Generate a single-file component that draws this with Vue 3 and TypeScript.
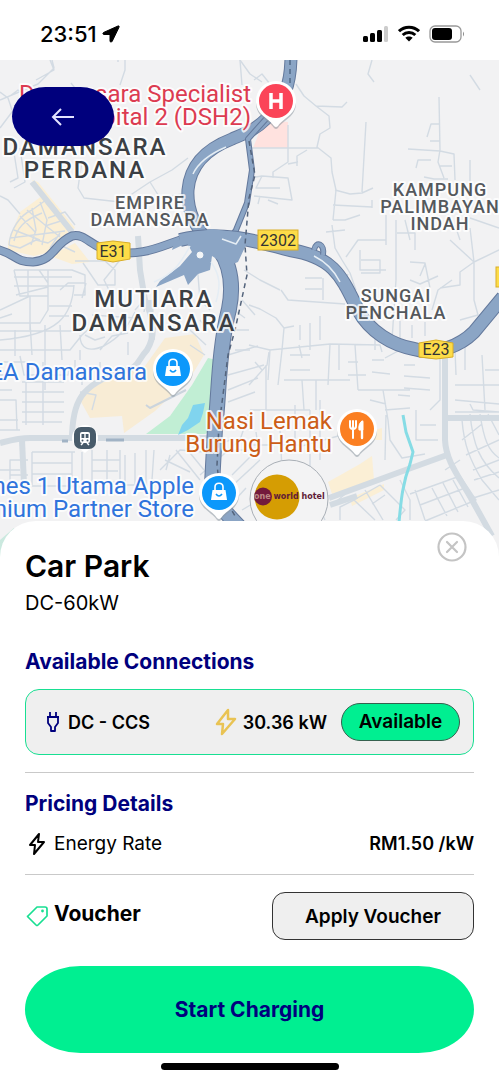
<script setup lang="ts">
interface Label {
  lines: string[]
  x: number
  y: number
  step: number
  kind: string
}

interface Pin {
  x: number
  y: number
  color: string
  icon: 'hospital' | 'bag' | 'food'
}

const labels: Label[] = [
  { lines: ['Damansara Specialist', 'Hospital 2 (DSH2)'], x: 251, y: 102, step: 23, kind: 'place health' },
  { lines: ['DAMANSARA', 'PERDANA'], x: 85, y: 155, step: 23, kind: 'area large' },
  { lines: ['EMPIRE', 'DAMANSARA'], x: 150, y: 209, step: 17, kind: 'area small' },
  { lines: ['KAMPUNG', 'PALIMBAYAN', 'INDAH'], x: 440, y: 196, step: 17, kind: 'area small' },
  { lines: ['MUTIARA', 'DAMANSARA'], x: 154, y: 307, step: 24, kind: 'area large' },
  { lines: ['SUNGAI', 'PENCHALA'], x: 396, y: 302, step: 17, kind: 'area small' },
  { lines: ['IKEA Damansara'], x: 147, y: 380, step: 23, kind: 'place shop' },
  { lines: ['Nasi Lemak', 'Burung Hantu'], x: 332, y: 429, step: 23, kind: 'place food' },
  { lines: ['Machines 1 Utama Apple', 'Premium Partner Store'], x: 194, y: 494, step: 23, kind: 'place shop' },
]

const pins: Pin[] = [
  { x: 276, y: 101, color: '#fb4458', icon: 'hospital' },
  { x: 173, y: 369, color: '#0c98fb', icon: 'bag' },
  { x: 357, y: 429, color: '#fb7f22', icon: 'food' },
  { x: 219, y: 493, color: '#0c98fb', icon: 'bag' },
]

const minorRoads: string[] = [
  'M52 60L54 68L38 84L0 100M50 60L54 70L36 80M71 83L78 92L95 104M125 60V70L120 85M118 62V50M0 92L8 98L12 110M0 128L12 112L24 122L40 130M10 96L18 90L24 94M0 196L8 200L20 214M82 160L78 188L84 198L120 202L150 182L172 170L188 158M150 182L160 198L182 194M12 140L18 178L10 182M20 148L25 182L14 188',
  'M240 60L250 74L262 82M254 80L262 74L270 84M296 84L304 96L316 106L329 116L330 128L320 134L317 147L331 158L332 172L336 190L333 220M316 106L342 107L347 102M249 148H318M366 122L362 192M335 190L350 194L362 193L373 188M333 205L372 207M372 200V208M288 125V162L273 172V178M288 164L298 162M297 166L297 156L307 150M250 178L262 176L288 178L292 200L254 196M262 176L256 188L280 188M268 200L278 204M258 204L260 196M439 97L440 150L438 162L444 178M427 137L431 124L440 124M408 149L440 151L454 154L455 180M416 168L418 160H431M440 166H452M424 177L434 179L448 179M470 160V184M430 141H440M372 60L368 74L374 82M470 75L480 90M470 218L499 228',
  'M332 225L335 248L342 260L350 273L356 290M333 220H345L360 215M326 232L345 230M346 257L358 240L386 240M360 250V270H386M361 260H380V273H361M348 274L340 290M396 220V280L392 340M386 215V245M397 233H415V250M410 262L425 263L430 288M450 240L474 262V300L478 315M474 262L499 250M455 225L460 240M452 280L438 290L432 310M425 264L420 276M410 280L420 284L438 276M478 315L460 320M474 262L460 272V285L440 288M470 228L474 262M405 220L410 240',
  'M305 278H322M305 289H322M323 278V300M281 290L288 300L345 304M249 305L260 309L276 318L284 328L282 350L278 385M284 328L294 326M300 325V340M310 323V350M320 316V340M249 345L270 350L330 344L380 345L382 352M270 350L268 380M330 344L328 385M339 345V370M355 345L358 390M299 345L302 358M365 330L375 336V350M400 320V350L385 358M412 325V338M425 322V336M440 350V400L430 410M290 355H310M290 370L310 370M255 362L262 370M348 362H358M348 375H366M358 390H410M372 360H384M372 372L390 374M404 365H415M404 376L430 378M404 388L430 390M455 350L456 375M455 385L499 385M482 355L485 410M455 400L499 404M465 340V370M485 370L499 370',
  'M249 385L267 365L269 352M266 365V410M284 380H350M250 410H310M302 380L304 410M316 380V410M249 445H303M256 432L258 446M280 430L282 470M295 405V450M310 410V480M320 400V460M250 410L240 440L200 475M240 425L250 420L249 430M228 390L258 378M228 375L264 365M228 402L255 392M228 355L258 346M230 440L210 448M228 450L250 450M232 475L252 455M232 486L260 460M235 500L246 488M242 510L252 504',
  'M383 390L388 420L390 440L402 458L425 454M385 410L410 408M416 410V440L438 440M420 425H436M370 400L386 404M386 415L385 460M398 395L410 396M470 404L473 410L499 412M455 412H499M462 420C464 445 470 460 482 480L499 500M470 414C473 445 480 462 499 478M480 414C484 440 488 450 499 458M488 414L499 435M462 440L482 424M466 455L499 440M473 470L499 460M474 480L499 472M470 499L499 490M445 470L460 460M332 505L350 490L380 480L415 465M340 520V507L354 500L375 520M354 500L380 485M365 490L383 520M380 485L405 510L396 520M385 495L372 504M400 480L410 500V520M415 490L425 520M410 494L460 476L476 500L425 521M420 505L465 488M432 488L447 516M443 483L458 512M453 480L468 507M320 510L325 520M302 446L360 430',
  'M9 245C10 230 20 215 32 210L46 200L54 206M14 241C17 228 24 220 42 213M9 245L20 248L36 240L48 243L60 235M27 210L45 225L60 237M20 216L36 233M14 230L40 240M32 208L36 230L31 245M40 202L47 220L42 245M10 238L65 231M48 218L65 212L75 225M45 226L64 220M60 233L50 248M52 248L58 253M60 245L75 252',
  'M14 270H72L85 275V295H74M14 270L20 296H48V270M14 277H72M14 286H74M16 295L48 287M28 270V297M39 270L48 283M0 310L30 296M0 318L12 314M48 287V310L40 323H0M30 296V330M60 290L68 283H85M75 261H105L115 270V285H98L83 263M86 283L82 298M49 306H72M49 316H69M74 285C72 315 60 335 0 340M0 350H70L82 335L92 326M0 331H80M15 330V356M30 322L32 355M45 325V390M60 325L62 360M80 335C80 350 90 352 104 346C118 338 126 330 135 312M85 335L95 340L105 337M100 350L112 336L128 333M120 260L104 280L110 292M128 342V355M135 310L144 300M92 315L135 318M80 350V360M146 300L144 312',
  'M0 362H28M0 375H14M0 390H12M0 400H16L17 430M20 356L24 375H68L70 365M22 382H64M22 392H64M22 402H64M22 412H64M22 422H62M26 365V425M43 362V425M75 360V374M0 420H18M0 430H20M82 366V385M100 362V380M80 392L96 395L92 410M32 452V485M32 452H75M32 463H72M32 474H72M32 486H74M72 452V488M92 450V482H118M92 460H120M92 471H118M107 450V480M120 450V482M82 452L82 490M125 455V485H146V450M135 453V485M154 450L152 480L165 485M160 470L180 450L205 452M165 460L190 472M170 455L166 470M176 450L200 480M186 448L204 470M28 460H10V487M10 475H28M0 470H20',
  'M196 250L200 300L210 310M200 320L208 330M190 330L206 345M190 345L205 355M240 60L242 85M235 350H250M234 330H249M242 300L255 315M244 270L260 280L280 290M234 310L245 318',
]

const arterials: string[] = [
  'M138 236L140 270L145 300C154 320 156 335 147 350C136 362 140 368 120 372C82 385 72 400 72 440',
  'M0 443C8 441 18 438 30 438H214',
  'M22 440L24 484',
  'M445 349V440C446 462 460 478 472 500L492 536',
  'M329 498L400 472L447 455',
  'M446 418H499',
  'M330 505L357 496',
  'M32 182L72 232M150 300L152 340',
]

const highways: { d: string; width: number }[] = [
  { d: 'M291 55C291 85 284 103 266 119C255 130 246 133 232 139C206 149 190 166 188 190C187 208 193 225 209 242', width: 12 },
  { d: 'M283 103L265 120L248 139L252 170L247 203L236 230L226 245', width: 5 },
  { d: 'M-4 249C17 254 14 262 33 262C55 260 53 244 72 236C85 233 90 246 109 251C145 258 164 244 184 239C207 232 229 237 245 238', width: 8 },
  { d: 'M180 240C220 230 260 242 290 250C335 257 342 278 358 310C370 332 392 345 414 349C437 356 461 345 474 332L503 297', width: 13 },
  { d: 'M208 238C228 253 235 279 229 309C218 352 219 400 215 428L212 485C213 502 229 516 244 532', width: 15 },
  { d: 'M314 250C316 240 325 244 323 255', width: 5 },
]
</script>

<template>
  <div class="screen">
    <header class="status">
      <div class="clock">
        <span>23:51</span>
        <svg width="18" height="18" viewBox="0 0 18 18" aria-hidden="true">
          <path d="M16 1L1.500 7.500C.5 8 .8 9.500 2 9.500H8V16C8 17.300 9.600 17.500 10.200 16.300L17 2.300C17.500 1.200 16.900.6 16 1Z" stroke="#000" />
        </svg>
      </div>
      <div class="signals">
        <svg width="26" height="18" viewBox="0 0 26 18" aria-hidden="true">
          <rect x="0" y="11" width="5" height="6" rx="1.500" />
          <rect x="7" y="8" width="5" height="9" rx="1.500" />
          <rect x="14" y="5" width="5" height="12" rx="1.500" />
          <rect x="21" y="1" width="4" height="16" rx="1.500" fill="#ccc" />
        </svg>
        <svg width="22" height="18" viewBox="0 0 22 18" aria-hidden="true">
          <g fill="none" stroke="#000" stroke-width="3">
            <path d="M1 6.200C6.600.8 15.400.8 21 6.200" />
            <path d="M4.700 10C8.200 6.700 13.800 6.700 17.300 10" />
          </g>
          <path d="M7.300 12.800C9.400 10.900 12.600 10.900 14.700 12.800L11 16.600Z" />
        </svg>
        <svg width="36" height="18" viewBox="0 0 36 18" aria-hidden="true">
          <rect x="1" y="1" width="31" height="16" rx="5" fill="none" stroke="#999" stroke-width="1.300" />
          <rect x="3" y="3" width="20" height="12" rx="3" />
          <path d="M34 6.500Q36 9 34 11.500Z" fill="#888" />
        </svg>
      </div>
    </header>

    <main>
      <section class="map" aria-label="Map">
        <svg class="canvas" viewBox="0 60 499 502" role="img" aria-label="Street map of Mutiara Damansara">
          <rect x="0" y="60" width="499" height="502" fill="#f2f2f3" />
          <g fill="#fbefd5">
            <path d="M8 242L20 212L42 196L32 180L38 182L75 228L66 234L50 252L34 256L8 250Z" />
            <path d="M50 256L75 243L90 262L72 264Z" />
            <path d="M80 400L92 385L145 366L165 338L195 334L204 355L192 375L155 411L124 433L122 416L90 418Z" fill="#f8ecd5" />
            <path d="M328 482L360 464L372 456L374 480L332 494Z" />
            <path d="M350 498L384 484L384 490L352 506Z" />
            <path d="M374 430L382 428V440H374Z" />
          </g>
          <path d="M264 120L288 122V148H253Z" fill="#ffe2df" />
          <path d="M208 358L192 385L170 416L146 434H205L214 430L217 360Z" fill="#c1eed4" />
          <path d="M205 403L193 405L188 418L182 425L178 435L188 430L200 422L203 413Z" fill="#80d4ee" />
          <path d="M0 540L14 528L30 562H0Z" fill="#cbe9df" />

          <g class="lines">
            <path v-for="(d, i) in minorRoads" :key="i" :d="d" stroke="#d3dbe3" stroke-width="1.400" />
            <path v-for="(d, i) in arterials" :key="i" :d="d" stroke="#d3dbe2" stroke-width="6" />
            <path d="M403 415L406 432L413 452L410 464C402 485 401 502 399 522" stroke="#86dce5" stroke-width="3" />
            <path d="M106 440H124M62 441H68" stroke="#a1b3c5" stroke-width="3" />
            <path d="M146 405L150 408L186 390" stroke="#cbd4dd" stroke-width="2" />
            <g v-for="(road, i) in highways" :key="i">
              <path :d="road.d" stroke="#64799c" :stroke-width="road.width + 1" />
              <path :d="road.d" stroke="#8ba5c5" :stroke-width="road.width - 1" />
            </g>
            <path d="M174 243L190 234L212 229L240 233L247 243L238 262L228 266L212 256L210 270L198 274L188 285L184 275L156 287L160 281L180 266L192 252L187 243L172 250Z" fill="#8ba5c5" />
            <circle cx="200" cy="255" r="3" fill="#f4f6f8" stroke="#f4f6f8" />
            <path d="M154 282C176 273 182 260 190 246M222 239L236 244L241 236M211 262C220 275 221 285 216 302M193 174C199 161 212 153 226 147M314 256C326 262 335 272 340 282" stroke="#e5edf4" stroke-width="1.500" />
            <path d="M249 141L255 175L249 198L245 245L247 275L242 298L235 330L228 355L223 395L219 425L217 465L220 490L235 516" stroke="#54647c" stroke-width="1.500" stroke-dasharray="5 4" />
            <path d="M290 60V84L281 108" stroke="#526987" stroke-width="1.500" stroke-dasharray="5 4" />
          </g>

          <g class="shields">
            <path d="M97 243L113 241L130 243V259L113 262L97 259Z" />
            <path d="M419 343L436 340L453 343V357L436 359L419 357Z" />
            <rect x="258" y="230" width="40" height="20" />
            <rect x="496" y="267" width="10" height="20" />
            <text x="113" y="257">E31</text>
            <text x="436" y="355">E23</text>
            <text x="278" y="246">2302</text>
          </g>

          <text v-for="label in labels" :key="label.lines.join()" :class="label.kind">
            <tspan
              v-for="(line, i) in label.lines"
              :key="line"
              :x="label.x"
              :y="label.y + i * label.step"
            >{{ line }}</tspan>
          </text>

          <g v-for="pin in pins" :key="`${pin.x}-${pin.y}`" :transform="`translate(${pin.x} ${pin.y})`">
            <path d="M-20 1C-20 15 -7 18 -2 26Q0 28 2 26C7 18 20 15 20 1Z" fill="#8b96a088" transform="translate(0 1)" />
            <path d="M-20 0A20 20 0 1 1 20 0C20 14 7 17 2 25Q0 27 -2 25C-7 17 -20 14 -20 0Z" fill="#fff" />
            <circle r="17" :fill="pin.color" />
            <path v-if="pin.icon === 'hospital'" d="M-5 -8V8M5 -8V8M-5 0H5" stroke="#fff" stroke-width="3.500" fill="none" />
            <g v-else-if="pin.icon === 'bag'">
              <path d="M-6.500 -3H6.500L8 7H-8Z" fill="#fff" />
              <path d="M-4 -3V-6C-4 -11 4 -11 4 -6V-3" fill="none" stroke="#fff" stroke-width="1.600" />
              <path d="M-3 1Q0 5 3 1" fill="none" stroke="#0c98fb" stroke-width="1.600" />
            </g>
            <g v-else fill="none" stroke="#fff" stroke-linecap="round">
              <path d="M-7 -8V-3Q-7 0 -4 0Q-1 0 -1 -3V-8M-4 -8V9" stroke-width="2" />
              <path d="M5 9V-7" stroke-width="2.400" />
              <path d="M5.500 -8Q1 -6 2 1H5.500Z" fill="#fff" stroke-width="1" />
            </g>
          </g>

          <g transform="translate(85 438)">
            <path d="M-13 0A13 13 0 0 1 13 0C13 8 5 10 0 15C-5 10 -13 8 -13 0Z" fill="#fff" />
            <rect x="-11" y="-11" width="22" height="22" rx="7" fill="#485b6a" />
            <rect x="-5" y="-6" width="10" height="11" rx="2" fill="#fff" />
            <path d="M-3.500 -4H-.7V0H-3.500ZM.7 -4H3.500V0H.7Z" fill="#485b6a" />
            <circle cx="-2.500" cy="2.500" r="1" fill="#485b6a" />
            <circle cx="2.500" cy="2.500" r="1" fill="#485b6a" />
            <path d="M-4 7L-2 5M4 7L2 5" stroke="#fff" stroke-width="1.500" />
          </g>

          <g>
            <circle cx="289" cy="499" r="39" fill="#f3f3f4" stroke="#a9afb6" />
            <circle cx="277" cy="497" r="22.500" fill="#d59d03" />
            <circle cx="263" cy="496.500" r="9" fill="#731a3c" />
            <text x="254" y="499" class="hotel"><tspan fill="#bd8a85">one</tspan> world hotel</text>
          </g>
        </svg>
        <button class="back" type="button" aria-label="Back">
          <svg width="24" height="20" viewBox="0 0 24 20" aria-hidden="true">
            <path d="M23 10H2M10 2L2 10L10 18" fill="none" stroke="#e3e3ff" stroke-width="2" />
          </svg>
        </button>
      </section>

      <section class="sheet">
        <div class="heading">
          <div>
            <h1>Car Park</h1>
            <p>DC-60kW</p>
          </div>
          <button class="close" type="button" aria-label="Close">
            <svg width="30" height="30" viewBox="0 0 30 30" aria-hidden="true">
              <g fill="none" stroke="#c4c4c4" stroke-width="2.200" stroke-linecap="round">
                <circle cx="15" cy="15" r="13.500" />
                <path d="M10 10L20 20M20 10L10 20" />
              </g>
            </svg>
          </button>
        </div>

        <h2>Available Connections</h2>
        <div class="connection">
          <svg width="14" height="22" viewBox="0 0 14 22" aria-hidden="true">
            <path d="M4 1V6M10 1V6M1 6H13M2 6V12L5 16V20H9V16L12 12V6" fill="none" stroke="#00007d" stroke-width="1.800" stroke-linejoin="round" />
          </svg>
          <span class="plug-name">DC - CCS</span>
          <svg width="22" height="28" viewBox="0 0 22 28" aria-hidden="true">
            <path d="M13 2L2 16H8L7 26L20 11H13Z" fill="none" stroke="#e9c353" stroke-width="2.500" stroke-linejoin="round" />
          </svg>
          <span class="power">30.36 kW</span>
          <span class="badge">Available</span>
        </div>

        <div class="pricing">
          <h2>Pricing Details</h2>
          <div class="row">
            <svg class="icon" width="24" height="24" viewBox="0 0 24 24" aria-hidden="true">
              <path d="M14 2L5 13H10L9 22L19 10H13Z" fill="none" stroke="#000" stroke-width="2" stroke-linejoin="round" />
            </svg>
            <span>Energy Rate</span>
            <strong>RM1.50 /kW</strong>
          </div>
        </div>

        <div class="voucher">
          <svg class="icon" width="24" height="24" viewBox="0 0 24 24" aria-hidden="true">
            <path d="M3 12L12 3H20Q22 3 22 5V12L13 21Q12 22 11 21L3 13Q2 12 3 12Z" fill="none" stroke="#18df92" stroke-width="1.700" stroke-linejoin="round" />
            <circle cx="17.500" cy="7" r="1.400" fill="#18df92" />
          </svg>
          <h3>Voucher</h3>
          <button class="apply" type="button">Apply Voucher</button>
        </div>

        <button class="start" type="button">Start Charging</button>
        <div class="home-bar"></div>
      </section>
    </main>
  </div>
</template>

<style>
body {
  margin: 0;
  background: #fff;
}
</style>

<style scoped>
.screen {
  font-family: Inter, 'Liberation Sans', sans-serif;
  color: #000;
}

.screen * {
  box-sizing: border-box;
}

.status {
  display: flex;
  align-items: center;
  justify-content: space-between;
  height: 60px;
  padding: 8px 34px 0 40px;
}

.clock,
.signals {
  display: flex;
  align-items: center;
}

.clock {
  gap: 5px;
  font-size: 22px;
  line-height: 28px;
  font-weight: 500;
}

.signals {
  gap: 9px;
}

.map {
  position: relative;
}

.canvas {
  display: block;
  width: 100%;
  height: auto;
}

.lines {
  fill: none;
  stroke-linejoin: round;
}

.canvas text {
  font-family: Roboto, sans-serif;
}

.area,
.place {
  paint-order: stroke;
  stroke: #fffc;
  stroke-width: 4px;
  stroke-linejoin: round;
}

.area {
  text-anchor: middle;
  font-weight: 500;
}

.large {
  font-size: 24px;
  letter-spacing: 2px;
  fill: #3b3f44;
}

.small {
  font-size: 18px;
  letter-spacing: 1px;
  fill: #54585c;
}

.place {
  text-anchor: end;
  font-size: 24px;
}

.health {
  fill: #dc3b51;
}

.shop {
  fill: #2f74dc;
}

.food {
  fill: #cc5d17;
}

.shields {
  fill: #fddc48;
  stroke: #d9ae28;
}

.shields text {
  fill: #333;
  stroke: none;
  font-size: 16px;
  text-anchor: middle;
}

.canvas .hotel {
  font-family: 'DejaVu Sans', sans-serif;
  font-size: 8px;
  font-weight: 700;
  fill: #611b37;
}

button {
  padding: 0;
  border: 0;
  font: inherit;
  color: inherit;
  cursor: pointer;
}

.back {
  position: absolute;
  top: 27px;
  left: 12px;
  display: flex;
  align-items: center;
  justify-content: center;
  width: 102px;
  height: 59px;
  border-radius: 34px / 30px;
  background: #00007d;
}

.sheet {
  position: relative;
  margin-top: -41px;
  padding: 11px 25px 10px;
  border-radius: 36px 36px 0 0;
  background: #fff;
}

.heading {
  display: flex;
  align-items: flex-start;
  justify-content: space-between;
}

h1,
h2,
h3,
p {
  margin: 0;
}

h1 {
  padding-top: 15px;
  font-size: 30px;
  line-height: 38px;
  font-weight: 600;
}

p {
  padding-top: 4px;
  font-size: 20px;
  line-height: 28px;
}

.close {
  display: flex;
  margin-right: 7px;
  background: none;
}

h2,
h3 {
  font-size: 21px;
  line-height: 28px;
  font-weight: 700;
}

h2 {
  color: #00007d;
}

h3 {
  padding-bottom: 4px;
}

.sheet > h2 {
  padding-top: 31px;
}

.connection {
  display: flex;
  align-items: center;
  height: 66px;
  margin-top: 13px;
  padding: 0 13px 0 20px;
  border: 1px solid #18df92;
  border-radius: 14px;
  background: #efefef;
  font-size: 18px;
  font-weight: 600;
}

.plug-name {
  flex: 1;
  padding-left: 8px;
}

.power {
  padding: 0 14px 0 6px;
}

.badge {
  width: 119px;
  border: 1px solid #35614f;
  border-radius: 19px;
  background: #00ef91;
  font-size: 19px;
  line-height: 36px;
  text-align: center;
}

.pricing {
  margin-top: 17px;
  padding: 17px 0 16px;
  border: solid #c9c9c9;
  border-width: 1px 0;
}

.row,
.voucher {
  display: flex;
  align-items: center;
}

.row {
  padding-top: 12px;
  font-size: 19px;
  line-height: 28px;
}

.icon {
  margin-right: 5px;
}

.row strong {
  margin-left: auto;
  font-size: 18px;
  font-weight: 600;
}

.voucher {
  padding-top: 17px;
}

.apply {
  width: 202px;
  height: 48px;
  margin-left: auto;
  border: 1px solid #333;
  border-radius: 13px;
  background: #efefef;
  font-size: 19px;
  font-weight: 600;
}

.start {
  display: block;
  width: 100%;
  height: 87px;
  margin-top: 26px;
  border-radius: 56px / 44px;
  background: #00ef91;
  color: #00007d;
  font-size: 21px;
  font-weight: 700;
}

.home-bar {
  width: 178px;
  height: 7px;
  margin: 10px auto 0;
  border-radius: 4px;
  background: #000;
}
</style>
